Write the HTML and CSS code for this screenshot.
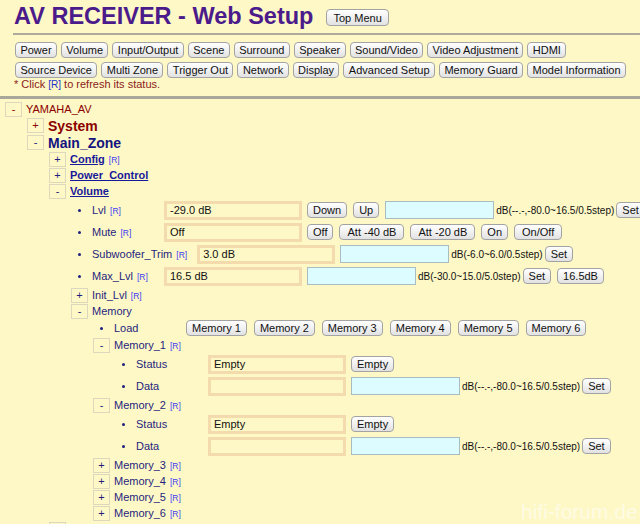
FILE: index.html
```html
<!DOCTYPE html>
<html>
<head>
<meta charset="utf-8">
<title>AV RECEIVER - Web Setup</title>
<link rel="stylesheet" href="styles.css">
</head>
<body>
<div class="head">
  <div class="titlebar">
    <h1 class="title">AV RECEIVER - Web Setup</h1>
    <button class="btn top">Top Menu</button>
  </div>
  <div class="menu">
    <div class="menurow">
      <button class="btn">Power</button>
      <button class="btn">Volume</button>
      <button class="btn">Input/Output</button>
      <button class="btn">Scene</button>
      <button class="btn">Surround</button>
      <button class="btn">Speaker</button>
      <button class="btn">Sound/Video</button>
      <button class="btn">Video Adjustment</button>
      <button class="btn">HDMI</button>
    </div>
    <div class="menurow">
      <button class="btn">Source Device</button>
      <button class="btn">Multi Zone</button>
      <button class="btn">Trigger Out</button>
      <button class="btn">Network</button>
      <button class="btn">Display</button>
      <button class="btn">Advanced Setup</button>
      <button class="btn">Memory Guard</button>
      <button class="btn">Model Information</button>
    </div>
  </div>
  <p class="note">* Click <span class="rn">[R]</span> to refresh its status.</p>
</div>
<div class="bar"></div>

<div class="tree">
  <div class="row"><span class="tg red">-</span><span class="lbl red">YAMAHA_AV</span></div>
  <div class="kids">
    <div class="row big"><span class="tg red">+</span><span class="lbl sys">System</span></div>
    <div class="row big"><span class="tg">-</span><span class="lbl mz">Main_Zone</span></div>
    <div class="kids">
      <div class="row"><span class="tg">+</span><span class="lbl"><a class="lnk">Config</a><span class="r">[R]</span></span></div>
      <div class="row"><span class="tg">+</span><span class="lbl"><a class="lnk">Power_Control</a></span></div>
      <div class="row"><span class="tg">-</span><span class="lbl"><a class="lnk">Volume</a></span></div>
      <div class="kids">
        <div class="leaf">
          <span class="dotcol"><i class="dot"></i></span>
          <span class="lc">Lvl<span class="r">[R]</span></span>
          <div class="disp">-29.0 dB</div>
          <button class="btn">Down</button>
          <button class="btn">Up</button>
          <div class="in"></div>
          <span class="hint">dB(--.-,-80.0~16.5/0.5step)</span>
          <button class="btn">Set</button>
        </div>
        <div class="leaf">
          <span class="dotcol"><i class="dot"></i></span>
          <span class="lc">Mute<span class="r">[R]</span></span>
          <div class="disp">Off</div>
          <button class="btn">Off</button>
          <button class="btn wide">Att -40 dB</button>
          <button class="btn wide">Att -20 dB</button>
          <button class="btn">On</button>
          <button class="btn wide">On/Off</button>
        </div>
        <div class="leaf">
          <span class="dotcol"><i class="dot"></i></span>
          <span class="lc">Subwoofer_Trim<span class="r">[R]</span></span>
          <div class="disp">3.0 dB</div>
          <div class="in"></div>
          <span class="hint">dB(-6.0~6.0/0.5step)</span>
          <button class="btn">Set</button>
        </div>
        <div class="leaf">
          <span class="dotcol"><i class="dot"></i></span>
          <span class="lc">Max_Lvl<span class="r">[R]</span></span>
          <div class="disp">16.5 dB</div>
          <div class="in"></div>
          <span class="hint">dB(-30.0~15.0/5.0step)</span>
          <button class="btn">Set</button>
          <button class="btn">16.5dB</button>
        </div>
        <div class="row"><span class="tg">+</span><span class="lbl">Init_Lvl<span class="r">[R]</span></span></div>
        <div class="row"><span class="tg">-</span><span class="lbl">Memory</span></div>
        <div class="kids">
          <div class="leaf load">
            <span class="dotcol"><i class="dot"></i></span>
            <span class="lc">Load</span>
            <button class="btn">Memory 1</button>
            <button class="btn">Memory 2</button>
            <button class="btn">Memory 3</button>
            <button class="btn">Memory 4</button>
            <button class="btn">Memory 5</button>
            <button class="btn">Memory 6</button>
          </div>
          <div class="row"><span class="tg">-</span><span class="lbl">Memory_1<span class="r">[R]</span></span></div>
          <div class="kids">
            <div class="leaf">
              <span class="dotcol"><i class="dot"></i></span>
              <span class="lc">Status</span>
              <div class="disp">Empty</div>
              <button class="btn">Empty</button>
            </div>
            <div class="leaf">
              <span class="dotcol"><i class="dot"></i></span>
              <span class="lc">Data</span>
              <div class="disp"></div>
              <div class="in"></div>
              <span class="hint">dB(--.-,-80.0~16.5/0.5step)</span>
              <button class="btn">Set</button>
            </div>
          </div>
          <div class="row"><span class="tg">-</span><span class="lbl">Memory_2<span class="r">[R]</span></span></div>
          <div class="kids">
            <div class="leaf">
              <span class="dotcol"><i class="dot"></i></span>
              <span class="lc">Status</span>
              <div class="disp">Empty</div>
              <button class="btn">Empty</button>
            </div>
            <div class="leaf">
              <span class="dotcol"><i class="dot"></i></span>
              <span class="lc">Data</span>
              <div class="disp"></div>
              <div class="in"></div>
              <span class="hint">dB(--.-,-80.0~16.5/0.5step)</span>
              <button class="btn">Set</button>
            </div>
          </div>
          <div class="row"><span class="tg">+</span><span class="lbl">Memory_3<span class="r">[R]</span></span></div>
          <div class="row"><span class="tg">+</span><span class="lbl">Memory_4<span class="r">[R]</span></span></div>
          <div class="row"><span class="tg">+</span><span class="lbl">Memory_5<span class="r">[R]</span></span></div>
          <div class="row"><span class="tg">+</span><span class="lbl">Memory_6<span class="r">[R]</span></span></div>
        </div>
      </div>
      <div class="row"><span class="tg">+</span><span class="lbl"><a class="lnk">Input</a><span class="r">[R]</span></span></div>
    </div>
  </div>
</div>

<div class="wm">hifi-forum.de</div>
</body>
</html>
```

FILE: styles.css
```css
html {
  overflow: hidden;
}

body {
  margin: 0;
  background: #fef8c6;
  font-family: "Liberation Sans", Arial, sans-serif;
  font-size: 11px;
  color: #1f1f7f;
}

.head {
  margin-left: 13px;
}

.titlebar {
  display: flex;
  align-items: flex-start;
  gap: 13px;
  height: 30px;
  padding: 3px 0 0 1px;
  border-bottom: 2px solid #aeab9c;
}

.title {
  margin: 0;
  font-size: 23.5px;
  line-height: 26px;
  font-weight: bold;
  color: #4b1b8b;
  white-space: nowrap;
}

.btn {
  font-family: "Liberation Sans", Arial, sans-serif;
  font-size: 11px;
  line-height: 14px;
  height: 16px;
  padding: 0 5px;
  margin: 0;
  border: 1px solid #a3a3a3;
  border-radius: 4px;
  background: linear-gradient(#ffffff, #f1f1f1 50%, #e2e2e2);
  color: #111;
  white-space: nowrap;
  flex: none;
}

.btn.top {
  margin-top: 6px;
  height: 17px;
  padding: 0 6px;
}

.btn.wide {
  padding: 0 7px;
}

.menu {
  padding: 7px 0 0 2px;
  display: flex;
  flex-direction: column;
  gap: 4px;
}

.menurow {
  display: flex;
  gap: 4px;
}

.menurow .btn {
  padding: 0 4.4px;
}

.note {
  margin: 0;
  padding-left: 1px;
  line-height: 13px;
  font-size: 11px;
  color: #8b1a1a;
}

.rn {
  font-size: 10px;
  color: #2233cc;
}

.bar {
  height: 3px;
  margin-top: 5px;
  background: #a9a69a;
}

.tree {
  padding: 2px 0 0 5px;
}

.kids {
  margin-left: 22px;
}

.row {
  display: flex;
  align-items: center;
  gap: 4px;
  height: 16px;
  white-space: nowrap;
}

.row.big {
  height: 17px;
}

.tg {
  width: 17px;
  height: 15px;
  box-sizing: border-box;
  border: 1px solid #dcd7bd;
  display: flex;
  align-items: center;
  justify-content: center;
  font-size: 11px;
  line-height: 1;
  flex: none;
}

.red {
  color: #8b0000;
}

.lbl.sys {
  font-size: 14px;
  font-weight: bold;
  color: #8b0000;
}

.lbl.mz {
  font-size: 14px;
  font-weight: bold;
  color: #14147e;
}

.lnk {
  font-weight: bold;
  text-decoration: underline;
  color: #18189a;
}

.r {
  font-size: 8.5px;
  color: #3b3bf5;
  margin-left: 4px;
  font-weight: normal;
}

.leaf {
  display: flex;
  align-items: center;
  height: 22px;
  white-space: nowrap;
}

.leaf.load {
  height: 18px;
}

.dotcol {
  width: 17px;
  margin-right: 4px;
  display: flex;
  justify-content: center;
  flex: none;
}

.dot {
  width: 3px;
  height: 3px;
  border-radius: 50%;
  background: #1f1f7f;
}

.lc {
  min-width: 72px;
  box-sizing: border-box;
  padding-right: 10px;
  flex: none;
}

.disp {
  width: 138px;
  height: 19px;
  box-sizing: border-box;
  border: 3px solid #f3dbad;
  padding-left: 3px;
  display: flex;
  align-items: center;
  color: #111;
  font-size: 11px;
  margin-right: 5px;
  flex: none;
}

.in {
  width: 109px;
  height: 18px;
  box-sizing: border-box;
  border: 1px solid #a9bcc0;
  background: #dcfcff;
  margin-right: 2px;
  flex: none;
}

.hint {
  font-size: 10px;
  color: #111;
  margin-right: 2px;
}

.leaf .btn {
  margin-right: 6px;
}

.leaf.load .btn {
  margin-right: 7px;
}

.wm {
  position: absolute;
  left: 521px;
  top: 500px;
  font-size: 21px;
  color: rgba(255, 255, 255, 0.55);
  white-space: nowrap;
}
```
